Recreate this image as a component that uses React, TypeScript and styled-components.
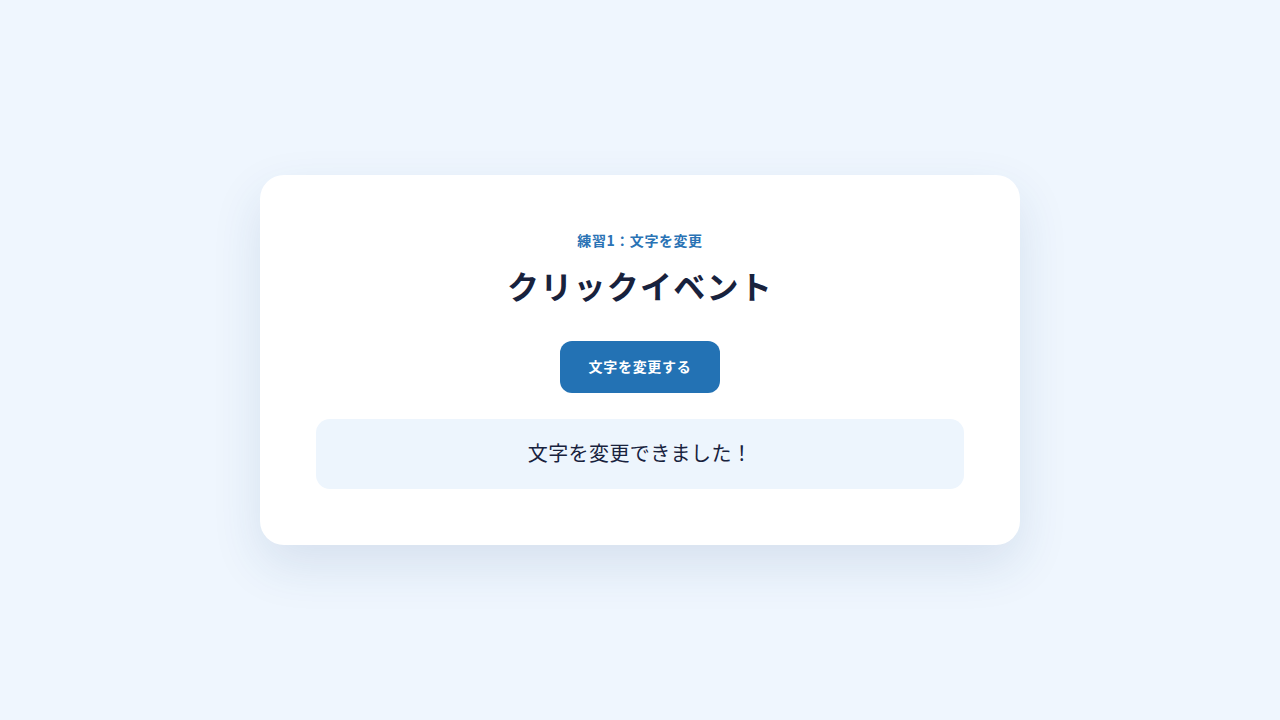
import React, { useState } from "react";
import styled, { createGlobalStyle } from "styled-components";

const GlobalStyle = createGlobalStyle`
  html, body {
    margin: 0;
    padding: 0;
    background: #eff6fe;
    font-family: "Noto Sans CJK JP", "Noto Sans", sans-serif;
  }
`;

const Page = styled.div`
  width: 100%;
  height: 720px;
  display: flex;
  align-items: center;
  justify-content: center;
`;

const Card = styled.div`
  width: 760px;
  box-sizing: border-box;
  padding: 55px 56px 56px;
  background: #fff;
  border-radius: 24px;
  box-shadow: 0 20px 50px rgba(30, 70, 120, 0.12);
  display: flex;
  flex-direction: column;
  align-items: center;
`;

const Label = styled.div`
  font-size: 14px;
  line-height: 20px;
  font-weight: 700;
  letter-spacing: 0.04em;
  color: #2a73b5;
`;

const Title = styled.h1`
  margin: 13px 0 0;
  font-size: 32px;
  line-height: 45px;
  font-weight: 700;
  letter-spacing: 0.04em;
  color: #18223d;
`;

const Button = styled.button`
  margin-top: 33px;
  width: 160px;
  height: 52px;
  padding: 0 0 3px;
  border: none;
  border-radius: 12px;
  background: #2372b4;
  color: #fff;
  font-family: inherit;
  font-size: 14px;
  font-weight: 700;
  letter-spacing: 0.05em;
  cursor: pointer;
`;

const Result = styled.div`
  margin-top: 26px;
  width: 100%;
  height: 70px;
  box-sizing: border-box;
  padding-bottom: 3px;
  border-radius: 14px;
  background: #edf5fd;
  display: flex;
  align-items: center;
  justify-content: center;
  font-size: 20px;
  letter-spacing: 0.02em;
  color: #18223d;
`;

export default function App() {
  const [text, setText] = useState("文字を変更できました！");
  return (
    <>
      <GlobalStyle />
      <Page>
        <Card>
          <Label>練習1：文字を変更</Label>
          <Title>クリックイベント</Title>
          <Button onClick={() => setText("文字を変更できました！")}>文字を変更する</Button>
          <Result>{text}</Result>
        </Card>
      </Page>
    </>
  );
}
